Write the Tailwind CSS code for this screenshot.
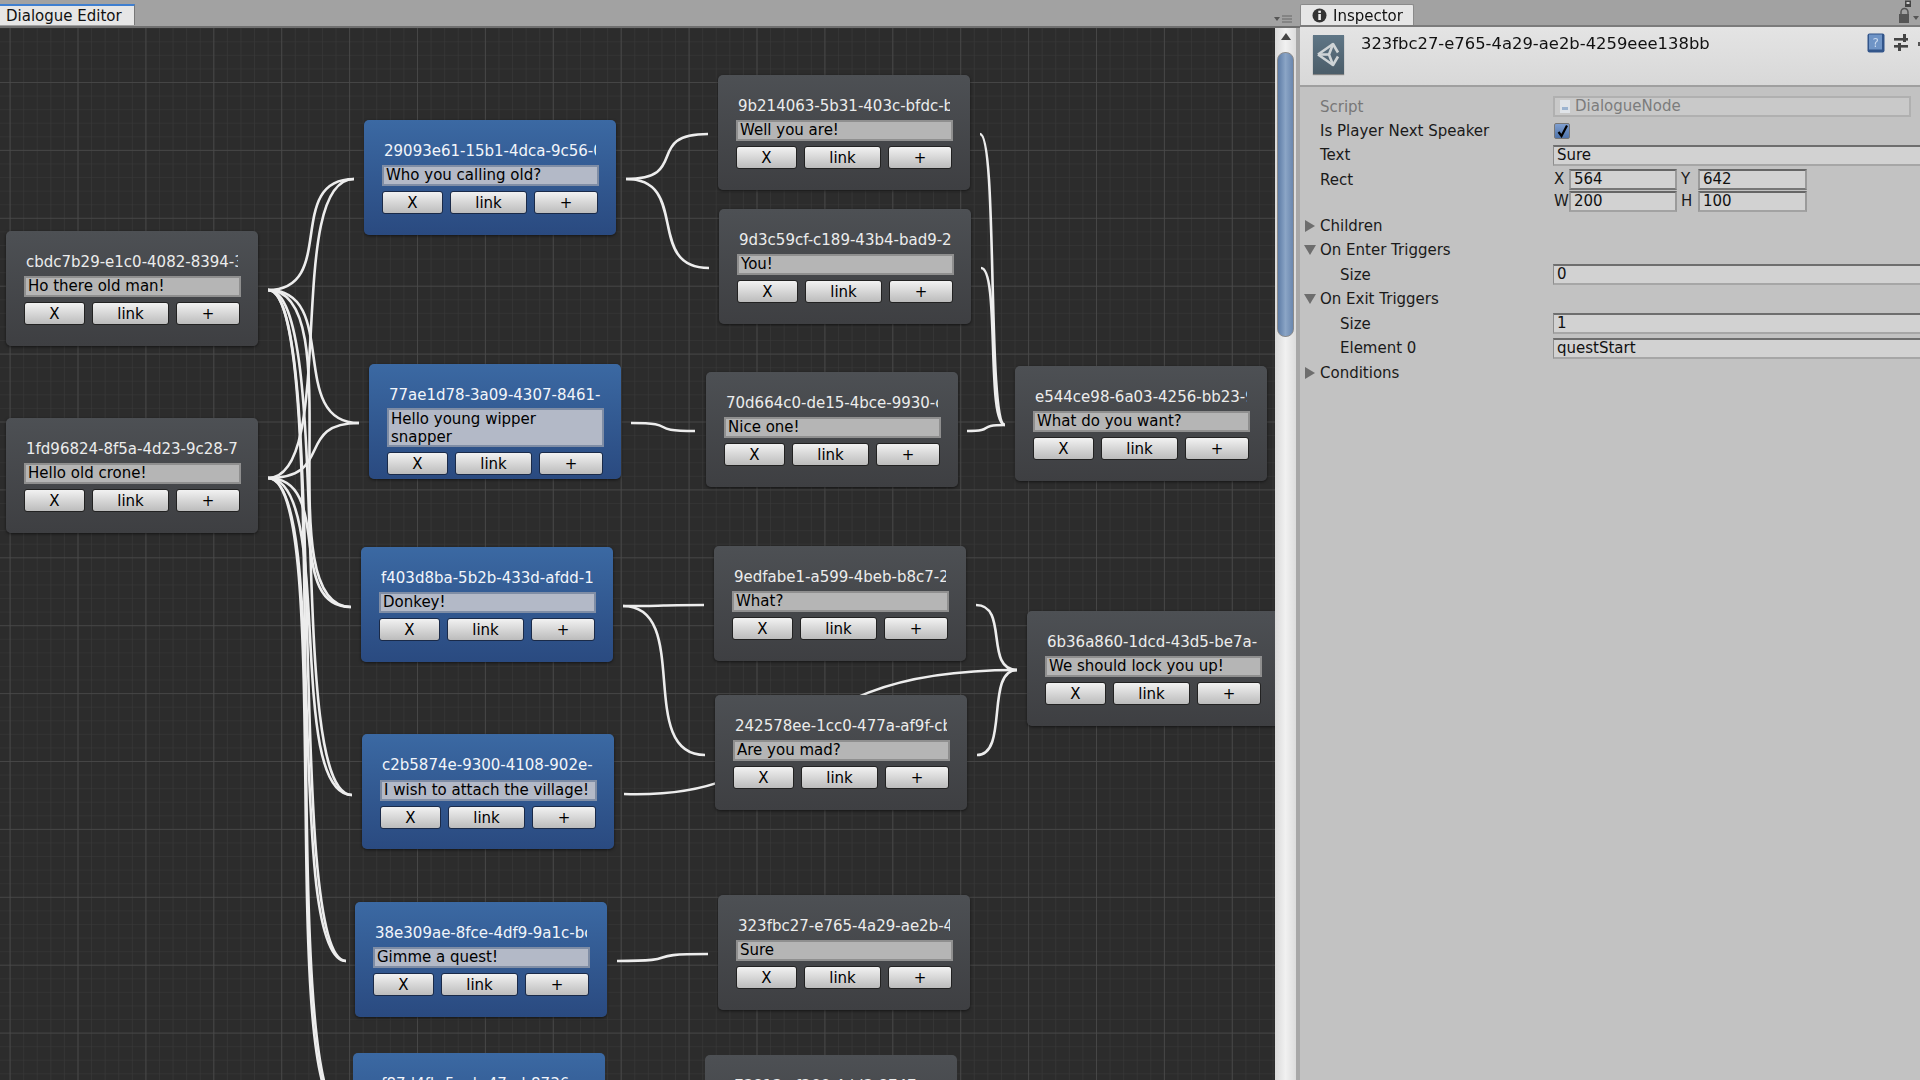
<!DOCTYPE html>
<html><head><meta charset="utf-8">
<script src="https://cdn.jsdelivr.net/npm/@tailwindcss/browser@4"></script>
</head>
<body class="m-0 overflow-hidden bg-[#a2a2a2]">
<div class="flex w-[1920px] h-[1080px] overflow-hidden font-['DejaVu_Sans',sans-serif] text-[15px] text-black blur-[0.4px]">

  <!-- LEFT: Dialogue Editor -->
  <div class="flex flex-col w-[1300px] shrink-0">
    <div class="relative h-[28px] bg-[#a2a2a2] border-b-2 border-[#6f6f6f] pt-[4px]">
      <div class="w-[135px] h-[21px] bg-[#e6e6e6] border-t-2 border-[#3f7fd0] border-r border-r-[#777] pl-[6px] leading-[20px] text-[15px] text-[#111]">Dialogue Editor</div>
      <div class="absolute right-[6px] top-[14px] flex items-center gap-[1px]">
        <svg width="20" height="10" viewBox="0 0 20 10"><polygon points="0,3 6,3 3,7" fill="#555"/><path d="M8 2h10M8 5h10M8 8h10" stroke="#666" stroke-width="1.2"/></svg>
      </div>
    </div>
    <div class="flex flex-1 min-h-0">
      <!-- Canvas -->
      <div class="relative w-[1275px] h-[1052px] overflow-hidden bg-[#2c2c2c]">
        <svg class="absolute left-0 top-0" width="1275" height="1052" viewBox="0 28 1275 1052" fill="none">
          <defs>
            <pattern id="minor" x="9.6" y="14.1" width="13.58" height="13.58" patternUnits="userSpaceOnUse">
              <path d="M0 0V13.58M0 0H13.58" stroke="#3a3a3a" stroke-width="1.2"/>
            </pattern>
            <pattern id="major" x="9.6" y="14.1" width="67.9" height="67.9" patternUnits="userSpaceOnUse">
              <path d="M0 0V67.9M0 0H67.9" stroke="#4a4a4a" stroke-width="1.6"/>
            </pattern>
          </defs>
          <rect x="0" y="28" width="1275" height="1052" fill="url(#minor)"/>
          <rect x="0" y="28" width="1275" height="1052" fill="url(#major)"/>
          <g stroke="#ededed" stroke-width="2.6" stroke-linecap="butt">
            <path d="M268 290C338 290 284 179 354 179"/>
            <path d="M268 290C341 290 286 423 359 423"/>
            <path d="M268 290C353 290 266 607 351 607"/>
            <path d="M268 290C335 290 285 795 352 795"/>
            <path d="M268 290C330 290 284 961 346 961"/>
            <path d="M268 290C336 290 275 1112 343 1112"/>
            <path d="M268 478C338 478 284 179 354 179"/>
            <path d="M268 478C335 478 294 423 359 423"/>
            <path d="M268 478C334 478 285 607 351 607"/>
            <path d="M268 478C335 478 285 795 352 795"/>
            <path d="M268 478C330 478 284 961 346 961"/>
            <path d="M268 478C336 478 275 1112 343 1112"/>
            <path d="M626 179C691 179 643 134 708 134"/>
            <path d="M626 179C691 179 644 268 709 268"/>
            <path d="M631 423C682 423 644 431 695 431"/>
            <path d="M623 606C688 606 639 605 704 605"/>
            <path d="M623 606C693 606 635 755 705 755"/>
            <path d="M624 794C820 800 760 670 1017 670"/>
            <path d="M617 961C690 961 635 954 708 954"/>
            <path d="M980 134C998 134 987 425 1005 425"/>
            <path d="M981 268C1000 268 986 425 1005 425"/>
            <path d="M967 431C997 431 975 425 1005 425"/>
            <path d="M976 605C1009 605 984 670 1017 670"/>
            <path d="M977 755C1009 755 985 670 1017 670"/>
          </g>
        </svg>

        <!-- gray nodes -->
        <div class="absolute left-[6px] top-[203px] w-[252px] h-[115px] rounded-[5px] bg-gradient-to-b from-[#4d5054] to-[#3e3f42] shadow-[0_1px_3px_#0008] pt-[21px]">
          <div class="ml-[20px] w-[212px] h-[20px] leading-[20px] overflow-hidden whitespace-nowrap text-[#ececec]">cbdc7b29-e1c0-4082-8394-3f</div>
          <div class="mx-[18px] mt-[4px] h-[21px] w-[217px] bg-[#b5b5b5] border-2 border-[#8f8f8f] pl-[2px] leading-[17px]">Ho there old man!</div>
          <div class="flex gap-[7px] ml-[18px] mt-[5px]">
            <button class="w-[61px] h-[23px] rounded-[3px] border border-[#222] bg-gradient-to-b from-[#f2f2f2] to-[#bcbcbc] leading-[20px]">X</button>
            <button class="w-[77px] h-[23px] rounded-[3px] border border-[#222] bg-gradient-to-b from-[#f2f2f2] to-[#bcbcbc] leading-[20px]">link</button>
            <button class="w-[64px] h-[23px] rounded-[3px] border border-[#222] bg-gradient-to-b from-[#f2f2f2] to-[#bcbcbc] leading-[20px]">+</button>
          </div>
        </div>
        <div class="absolute left-[6px] top-[390px] w-[252px] h-[115px] rounded-[5px] bg-gradient-to-b from-[#4d5054] to-[#3e3f42] shadow-[0_1px_3px_#0008] pt-[21px]">
          <div class="ml-[20px] w-[212px] h-[20px] leading-[20px] overflow-hidden whitespace-nowrap text-[#ececec]">1fd96824-8f5a-4d23-9c28-7e</div>
          <div class="mx-[18px] mt-[4px] h-[21px] w-[217px] bg-[#b5b5b5] border-2 border-[#8f8f8f] pl-[2px] leading-[17px]">Hello old crone!</div>
          <div class="flex gap-[7px] ml-[18px] mt-[5px]">
            <button class="w-[61px] h-[23px] rounded-[3px] border border-[#222] bg-gradient-to-b from-[#f2f2f2] to-[#bcbcbc] leading-[20px]">X</button>
            <button class="w-[77px] h-[23px] rounded-[3px] border border-[#222] bg-gradient-to-b from-[#f2f2f2] to-[#bcbcbc] leading-[20px]">link</button>
            <button class="w-[64px] h-[23px] rounded-[3px] border border-[#222] bg-gradient-to-b from-[#f2f2f2] to-[#bcbcbc] leading-[20px]">+</button>
          </div>
        </div>
        <div class="absolute left-[718px] top-[47px] w-[252px] h-[115px] rounded-[5px] bg-gradient-to-b from-[#4d5054] to-[#3e3f42] shadow-[0_1px_3px_#0008] pt-[21px]">
          <div class="ml-[20px] w-[212px] h-[20px] leading-[20px] overflow-hidden whitespace-nowrap text-[#ececec]">9b214063-5b31-403c-bfdc-b1</div>
          <div class="mx-[18px] mt-[4px] h-[21px] w-[217px] bg-[#b5b5b5] border-2 border-[#8f8f8f] pl-[2px] leading-[17px]">Well you are!</div>
          <div class="flex gap-[7px] ml-[18px] mt-[5px]">
            <button class="w-[61px] h-[23px] rounded-[3px] border border-[#222] bg-gradient-to-b from-[#f2f2f2] to-[#bcbcbc] leading-[20px]">X</button>
            <button class="w-[77px] h-[23px] rounded-[3px] border border-[#222] bg-gradient-to-b from-[#f2f2f2] to-[#bcbcbc] leading-[20px]">link</button>
            <button class="w-[64px] h-[23px] rounded-[3px] border border-[#222] bg-gradient-to-b from-[#f2f2f2] to-[#bcbcbc] leading-[20px]">+</button>
          </div>
        </div>
        <div class="absolute left-[719px] top-[181px] w-[252px] h-[115px] rounded-[5px] bg-gradient-to-b from-[#4d5054] to-[#3e3f42] shadow-[0_1px_3px_#0008] pt-[21px]">
          <div class="ml-[20px] w-[212px] h-[20px] leading-[20px] overflow-hidden whitespace-nowrap text-[#ececec]">9d3c59cf-c189-43b4-bad9-2a</div>
          <div class="mx-[18px] mt-[4px] h-[21px] w-[217px] bg-[#b5b5b5] border-2 border-[#8f8f8f] pl-[2px] leading-[17px]">You!</div>
          <div class="flex gap-[7px] ml-[18px] mt-[5px]">
            <button class="w-[61px] h-[23px] rounded-[3px] border border-[#222] bg-gradient-to-b from-[#f2f2f2] to-[#bcbcbc] leading-[20px]">X</button>
            <button class="w-[77px] h-[23px] rounded-[3px] border border-[#222] bg-gradient-to-b from-[#f2f2f2] to-[#bcbcbc] leading-[20px]">link</button>
            <button class="w-[64px] h-[23px] rounded-[3px] border border-[#222] bg-gradient-to-b from-[#f2f2f2] to-[#bcbcbc] leading-[20px]">+</button>
          </div>
        </div>
        <div class="absolute left-[706px] top-[344px] w-[252px] h-[115px] rounded-[5px] bg-gradient-to-b from-[#4d5054] to-[#3e3f42] shadow-[0_1px_3px_#0008] pt-[21px]">
          <div class="ml-[20px] w-[212px] h-[20px] leading-[20px] overflow-hidden whitespace-nowrap text-[#ececec]">70d664c0-de15-4bce-9930-ce</div>
          <div class="mx-[18px] mt-[4px] h-[21px] w-[217px] bg-[#b5b5b5] border-2 border-[#8f8f8f] pl-[2px] leading-[17px]">Nice one!</div>
          <div class="flex gap-[7px] ml-[18px] mt-[5px]">
            <button class="w-[61px] h-[23px] rounded-[3px] border border-[#222] bg-gradient-to-b from-[#f2f2f2] to-[#bcbcbc] leading-[20px]">X</button>
            <button class="w-[77px] h-[23px] rounded-[3px] border border-[#222] bg-gradient-to-b from-[#f2f2f2] to-[#bcbcbc] leading-[20px]">link</button>
            <button class="w-[64px] h-[23px] rounded-[3px] border border-[#222] bg-gradient-to-b from-[#f2f2f2] to-[#bcbcbc] leading-[20px]">+</button>
          </div>
        </div>
        <div class="absolute left-[1015px] top-[338px] w-[252px] h-[115px] rounded-[5px] bg-gradient-to-b from-[#4d5054] to-[#3e3f42] shadow-[0_1px_3px_#0008] pt-[21px]">
          <div class="ml-[20px] w-[212px] h-[20px] leading-[20px] overflow-hidden whitespace-nowrap text-[#ececec]">e544ce98-6a03-4256-bb23-9f</div>
          <div class="mx-[18px] mt-[4px] h-[21px] w-[217px] bg-[#b5b5b5] border-2 border-[#8f8f8f] pl-[2px] leading-[17px]">What do you want?</div>
          <div class="flex gap-[7px] ml-[18px] mt-[5px]">
            <button class="w-[61px] h-[23px] rounded-[3px] border border-[#222] bg-gradient-to-b from-[#f2f2f2] to-[#bcbcbc] leading-[20px]">X</button>
            <button class="w-[77px] h-[23px] rounded-[3px] border border-[#222] bg-gradient-to-b from-[#f2f2f2] to-[#bcbcbc] leading-[20px]">link</button>
            <button class="w-[64px] h-[23px] rounded-[3px] border border-[#222] bg-gradient-to-b from-[#f2f2f2] to-[#bcbcbc] leading-[20px]">+</button>
          </div>
        </div>
        <div class="absolute left-[714px] top-[518px] w-[252px] h-[115px] rounded-[5px] bg-gradient-to-b from-[#4d5054] to-[#3e3f42] shadow-[0_1px_3px_#0008] pt-[21px]">
          <div class="ml-[20px] w-[212px] h-[20px] leading-[20px] overflow-hidden whitespace-nowrap text-[#ececec]">9edfabe1-a599-4beb-b8c7-2f</div>
          <div class="mx-[18px] mt-[4px] h-[21px] w-[217px] bg-[#b5b5b5] border-2 border-[#8f8f8f] pl-[2px] leading-[17px]">What?</div>
          <div class="flex gap-[7px] ml-[18px] mt-[5px]">
            <button class="w-[61px] h-[23px] rounded-[3px] border border-[#222] bg-gradient-to-b from-[#f2f2f2] to-[#bcbcbc] leading-[20px]">X</button>
            <button class="w-[77px] h-[23px] rounded-[3px] border border-[#222] bg-gradient-to-b from-[#f2f2f2] to-[#bcbcbc] leading-[20px]">link</button>
            <button class="w-[64px] h-[23px] rounded-[3px] border border-[#222] bg-gradient-to-b from-[#f2f2f2] to-[#bcbcbc] leading-[20px]">+</button>
          </div>
        </div>
        <div class="absolute left-[715px] top-[667px] w-[252px] h-[115px] rounded-[5px] bg-gradient-to-b from-[#4d5054] to-[#3e3f42] shadow-[0_1px_3px_#0008] pt-[21px]">
          <div class="ml-[20px] w-[212px] h-[20px] leading-[20px] overflow-hidden whitespace-nowrap text-[#ececec]">242578ee-1cc0-477a-af9f-cb8</div>
          <div class="mx-[18px] mt-[4px] h-[21px] w-[217px] bg-[#b5b5b5] border-2 border-[#8f8f8f] pl-[2px] leading-[17px]">Are you mad?</div>
          <div class="flex gap-[7px] ml-[18px] mt-[5px]">
            <button class="w-[61px] h-[23px] rounded-[3px] border border-[#222] bg-gradient-to-b from-[#f2f2f2] to-[#bcbcbc] leading-[20px]">X</button>
            <button class="w-[77px] h-[23px] rounded-[3px] border border-[#222] bg-gradient-to-b from-[#f2f2f2] to-[#bcbcbc] leading-[20px]">link</button>
            <button class="w-[64px] h-[23px] rounded-[3px] border border-[#222] bg-gradient-to-b from-[#f2f2f2] to-[#bcbcbc] leading-[20px]">+</button>
          </div>
        </div>
        <div class="absolute left-[1027px] top-[583px] w-[252px] h-[115px] rounded-[5px] bg-gradient-to-b from-[#4d5054] to-[#3e3f42] shadow-[0_1px_3px_#0008] pt-[21px]">
          <div class="ml-[20px] w-[212px] h-[20px] leading-[20px] overflow-hidden whitespace-nowrap text-[#ececec]">6b36a860-1dcd-43d5-be7a-</div>
          <div class="mx-[18px] mt-[4px] h-[21px] w-[217px] bg-[#b5b5b5] border-2 border-[#8f8f8f] pl-[2px] leading-[17px]">We should lock you up!</div>
          <div class="flex gap-[7px] ml-[18px] mt-[5px]">
            <button class="w-[61px] h-[23px] rounded-[3px] border border-[#222] bg-gradient-to-b from-[#f2f2f2] to-[#bcbcbc] leading-[20px]">X</button>
            <button class="w-[77px] h-[23px] rounded-[3px] border border-[#222] bg-gradient-to-b from-[#f2f2f2] to-[#bcbcbc] leading-[20px]">link</button>
            <button class="w-[64px] h-[23px] rounded-[3px] border border-[#222] bg-gradient-to-b from-[#f2f2f2] to-[#bcbcbc] leading-[20px]">+</button>
          </div>
        </div>
        <div class="absolute left-[718px] top-[867px] w-[252px] h-[115px] rounded-[5px] bg-gradient-to-b from-[#4d5054] to-[#3e3f42] shadow-[0_1px_3px_#0008] pt-[21px]">
          <div class="ml-[20px] w-[212px] h-[20px] leading-[20px] overflow-hidden whitespace-nowrap text-[#ececec]">323fbc27-e765-4a29-ae2b-4259</div>
          <div class="mx-[18px] mt-[4px] h-[21px] w-[217px] bg-[#b5b5b5] border-2 border-[#8f8f8f] pl-[2px] leading-[17px]">Sure</div>
          <div class="flex gap-[7px] ml-[18px] mt-[5px]">
            <button class="w-[61px] h-[23px] rounded-[3px] border border-[#222] bg-gradient-to-b from-[#f2f2f2] to-[#bcbcbc] leading-[20px]">X</button>
            <button class="w-[77px] h-[23px] rounded-[3px] border border-[#222] bg-gradient-to-b from-[#f2f2f2] to-[#bcbcbc] leading-[20px]">link</button>
            <button class="w-[64px] h-[23px] rounded-[3px] border border-[#222] bg-gradient-to-b from-[#f2f2f2] to-[#bcbcbc] leading-[20px]">+</button>
          </div>
        </div>
        <div class="absolute left-[705px] top-[1027px] w-[252px] h-[115px] rounded-[5px] bg-gradient-to-b from-[#4d5054] to-[#3e3f42] pt-[21px]">
          <div class="ml-[20px] w-[212px] h-[20px] leading-[20px] overflow-hidden whitespace-nowrap text-[#ececec]">e73813c-f366-4dd3-8747-a</div>
        </div>

        <!-- blue nodes -->
        <div class="absolute left-[364px] top-[92px] w-[252px] h-[115px] rounded-[5px] bg-gradient-to-b from-[#3b69a3] to-[#2a4a80] shadow-[0_1px_3px_#0008] pt-[21px]">
          <div class="ml-[20px] w-[212px] h-[20px] leading-[20px] overflow-hidden whitespace-nowrap text-[#f2f5fa]">29093e61-15b1-4dca-9c56-0c</div>
          <div class="mx-[18px] mt-[4px] h-[21px] w-[217px] bg-[#b3b9c7] border-2 border-[#7f8da5] pl-[2px] leading-[17px]">Who you calling old?</div>
          <div class="flex gap-[7px] ml-[18px] mt-[5px]">
            <button class="w-[61px] h-[23px] rounded-[3px] border border-[#1a2a48] bg-gradient-to-b from-[#f2f2f2] to-[#bcbcbc] leading-[20px]">X</button>
            <button class="w-[77px] h-[23px] rounded-[3px] border border-[#1a2a48] bg-gradient-to-b from-[#f2f2f2] to-[#bcbcbc] leading-[20px]">link</button>
            <button class="w-[64px] h-[23px] rounded-[3px] border border-[#1a2a48] bg-gradient-to-b from-[#f2f2f2] to-[#bcbcbc] leading-[20px]">+</button>
          </div>
        </div>
        <div class="absolute left-[369px] top-[336px] w-[252px] h-[115px] rounded-[5px] bg-gradient-to-b from-[#3b69a3] to-[#2a4a80] shadow-[0_1px_3px_#0008] pt-[21px]">
          <div class="ml-[20px] w-[212px] h-[20px] leading-[20px] overflow-hidden whitespace-nowrap text-[#f2f5fa]">77ae1d78-3a09-4307-8461-</div>
          <div class="mx-[18px] mt-[3px] h-[39px] w-[217px] bg-[#b3b9c7] border-2 border-[#7f8da5] pl-[2px] leading-[18px]">Hello young wipper<br>snapper</div>
          <div class="flex gap-[7px] ml-[18px] mt-[5px]">
            <button class="w-[61px] h-[23px] rounded-[3px] border border-[#1a2a48] bg-gradient-to-b from-[#f2f2f2] to-[#bcbcbc] leading-[20px]">X</button>
            <button class="w-[77px] h-[23px] rounded-[3px] border border-[#1a2a48] bg-gradient-to-b from-[#f2f2f2] to-[#bcbcbc] leading-[20px]">link</button>
            <button class="w-[64px] h-[23px] rounded-[3px] border border-[#1a2a48] bg-gradient-to-b from-[#f2f2f2] to-[#bcbcbc] leading-[20px]">+</button>
          </div>
        </div>
        <div class="absolute left-[361px] top-[519px] w-[252px] h-[115px] rounded-[5px] bg-gradient-to-b from-[#3b69a3] to-[#2a4a80] shadow-[0_1px_3px_#0008] pt-[21px]">
          <div class="ml-[20px] w-[212px] h-[20px] leading-[20px] overflow-hidden whitespace-nowrap text-[#f2f5fa]">f403d8ba-5b2b-433d-afdd-1</div>
          <div class="mx-[18px] mt-[4px] h-[21px] w-[217px] bg-[#b3b9c7] border-2 border-[#7f8da5] pl-[2px] leading-[17px]">Donkey!</div>
          <div class="flex gap-[7px] ml-[18px] mt-[5px]">
            <button class="w-[61px] h-[23px] rounded-[3px] border border-[#1a2a48] bg-gradient-to-b from-[#f2f2f2] to-[#bcbcbc] leading-[20px]">X</button>
            <button class="w-[77px] h-[23px] rounded-[3px] border border-[#1a2a48] bg-gradient-to-b from-[#f2f2f2] to-[#bcbcbc] leading-[20px]">link</button>
            <button class="w-[64px] h-[23px] rounded-[3px] border border-[#1a2a48] bg-gradient-to-b from-[#f2f2f2] to-[#bcbcbc] leading-[20px]">+</button>
          </div>
        </div>
        <div class="absolute left-[362px] top-[706px] w-[252px] h-[115px] rounded-[5px] bg-gradient-to-b from-[#3b69a3] to-[#2a4a80] shadow-[0_1px_3px_#0008] pt-[21px]">
          <div class="ml-[20px] w-[212px] h-[20px] leading-[20px] overflow-hidden whitespace-nowrap text-[#f2f5fa]">c2b5874e-9300-4108-902e-</div>
          <div class="mx-[18px] mt-[5px] h-[21px] w-[217px] bg-[#b3b9c7] border-2 border-[#7f8da5] pl-[2px] leading-[17px] whitespace-nowrap">I wish to attach the village!</div>
          <div class="flex gap-[7px] ml-[18px] mt-[5px]">
            <button class="w-[61px] h-[23px] rounded-[3px] border border-[#1a2a48] bg-gradient-to-b from-[#f2f2f2] to-[#bcbcbc] leading-[20px]">X</button>
            <button class="w-[77px] h-[23px] rounded-[3px] border border-[#1a2a48] bg-gradient-to-b from-[#f2f2f2] to-[#bcbcbc] leading-[20px]">link</button>
            <button class="w-[64px] h-[23px] rounded-[3px] border border-[#1a2a48] bg-gradient-to-b from-[#f2f2f2] to-[#bcbcbc] leading-[20px]">+</button>
          </div>
        </div>
        <div class="absolute left-[355px] top-[874px] w-[252px] h-[115px] rounded-[5px] bg-gradient-to-b from-[#3b69a3] to-[#2a4a80] shadow-[0_1px_3px_#0008] pt-[21px]">
          <div class="ml-[20px] w-[212px] h-[20px] leading-[20px] overflow-hidden whitespace-nowrap text-[#f2f5fa]">38e309ae-8fce-4df9-9a1c-bc</div>
          <div class="mx-[18px] mt-[4px] h-[21px] w-[217px] bg-[#b3b9c7] border-2 border-[#7f8da5] pl-[2px] leading-[17px]">Gimme a quest!</div>
          <div class="flex gap-[7px] ml-[18px] mt-[5px]">
            <button class="w-[61px] h-[23px] rounded-[3px] border border-[#1a2a48] bg-gradient-to-b from-[#f2f2f2] to-[#bcbcbc] leading-[20px]">X</button>
            <button class="w-[77px] h-[23px] rounded-[3px] border border-[#1a2a48] bg-gradient-to-b from-[#f2f2f2] to-[#bcbcbc] leading-[20px]">link</button>
            <button class="w-[64px] h-[23px] rounded-[3px] border border-[#1a2a48] bg-gradient-to-b from-[#f2f2f2] to-[#bcbcbc] leading-[20px]">+</button>
          </div>
        </div>
        <div class="absolute left-[353px] top-[1025px] w-[252px] h-[115px] rounded-[5px] bg-gradient-to-b from-[#3b69a3] to-[#2a4a80] pt-[21px]">
          <div class="ml-[20px] w-[212px] h-[20px] leading-[20px] overflow-hidden whitespace-nowrap text-[#f2f5fa]">cf87d4fb-5aeb-47ed-8736-e</div>
        </div>
      </div>
      <!-- Scrollbar -->
      <div class="flex flex-col items-center w-[21px] h-[1052px] bg-gradient-to-r from-[#d9d9d9] via-[#f1f1f1] to-[#dcdcdc]">
        <svg class="mt-[3px]" width="12" height="12" viewBox="0 0 12 12"><polygon points="6,2 11,9 1,9" fill="#444"/></svg>
        <div class="mt-[9px] w-[17px] h-[285px] rounded-[8px] bg-gradient-to-r from-[#5d7ca6] via-[#8ba5c6] to-[#6a87ae] border border-[#8b8b8b]"></div>
      </div>
      <div class="w-[4px] bg-[#a8a8a8]"></div>
    </div>
  </div>

  <!-- RIGHT: Inspector -->
  <div class="flex flex-col flex-1 min-w-0">
    <div class="relative h-[27px] bg-[#a2a2a2] pt-[4px] border-b-2 border-[#7b7b7b]">
      <div class="flex items-center gap-[6px] w-[114px] h-[21px] bg-[#e6e6e6] rounded-t-[2px] border border-b-0 border-[#8a8a8a] pl-[11px] pt-[2px] text-[15px] text-[#111]">
        <svg width="15" height="15" viewBox="0 0 15 15" class="shrink-0 -mt-[2px]"><circle cx="7.5" cy="7.5" r="7" fill="#333"/><rect x="6.3" y="6" width="2.6" height="6" fill="#eee"/><rect x="6.3" y="2.7" width="2.6" height="2.2" fill="#eee"/></svg>
        <span>Inspector</span>
      </div>
      <svg class="absolute left-[597px] top-0" width="23" height="26" viewBox="0 0 23 26"><rect x="8" y="0.5" width="6" height="6.5" fill="#444"/><rect x="9.5" y="2" width="3" height="2" fill="#ccc"/><path d="M4 15v-3a3.5 3.5 0 0 1 7 0v3" fill="none" stroke="#555" stroke-width="1.5"/><rect x="2" y="14" width="10" height="9" fill="#555"/><polygon points="16,16 22,16 19,20" fill="#555"/></svg>
    </div>
    <div class="relative h-[60px] bg-gradient-to-b from-[#e4e4e4] to-[#d8d8d8] border-b-2 border-[#9f9f9f]">
      <div class="absolute left-[13px] top-[8px] flex items-center justify-center w-[31px] h-[39px] bg-gradient-to-b from-[#5f7686] to-[#4b5d69] shadow-[0_1px_1px_#0006]">
        <svg width="27" height="29" viewBox="0 0 27 29" fill="none" stroke="#cfd4d6" stroke-width="2.6" stroke-linejoin="round"><path d="M3 14.5 18 4l5 8.5"/><path d="M3 14.5 18 25l5-8.5"/><path d="M3 14.5h11"/><path d="M18 4 14 14.5 18 25"/></svg>
      </div>
      <div class="absolute left-[61px] top-[7px] text-[16.4px] leading-[20px] text-[#111]">323fbc27-e765-4a29-ae2b-4259eee138bb</div>
      <svg class="absolute left-[567px] top-[6px]" width="18" height="20" viewBox="0 0 18 20"><rect x="0.5" y="0.5" width="17" height="19" rx="2" fill="#32558a"/><rect x="2" y="1.5" width="13" height="15" fill="#6f94c6"/><text x="5.5" y="14" font-size="12" fill="#c9d9ef" font-family="DejaVu Sans">?</text></svg>
      <svg class="absolute left-[594px] top-[7px]" width="15" height="18" viewBox="0 0 15 18" fill="#444"><rect x="0" y="4" width="14" height="2.6"/><rect x="9" y="0" width="3" height="8"/><rect x="0" y="11" width="14" height="2.6"/><rect x="4" y="9" width="3" height="8"/></svg>
      <div class="absolute left-[618px] top-[15px] w-[2px] h-[4px] bg-[#555]"></div>
    </div>
    <div class="flex-1 bg-[#c2c2c2] pt-[7px] text-[#1a1a1a] text-[15px] overflow-hidden">
      <div class="flex items-center h-[24.5px] pl-[20px]">
        <span class="w-[233px] pt-[1px] text-[#777]">Script</span>
        <div class="flex items-center gap-[5px] w-[358px] h-[21px] bg-[#c9c9c9] border-2 border-[#b0b0b0] pl-[5px] text-[#7c7c7c]"><svg width="10" height="13" viewBox="0 0 10 13"><rect width="10" height="13" fill="#dfe3e8"/><rect x="2" y="7" width="6" height="3" fill="#9bb3d0"/></svg>DialogueNode</div>
      </div>
      <div class="flex items-center h-[24.5px] pl-[20px]">
        <span class="w-[233px] pt-[1px]">Is Player Next Speaker</span>
        <div class="flex items-center justify-center w-[16px] h-[16px] ml-[1px] rounded-[2px] bg-gradient-to-b from-[#7f9fd0] to-[#4f74aa] border border-[#777]">
          <svg width="13" height="14" viewBox="0 0 13 14" fill="none"><path d="M2.5 8 5.5 12 11 1.5" stroke="#000" stroke-width="2.2"/></svg>
        </div>
      </div>
      <div class="flex items-center h-[24.5px] pl-[20px]">
        <span class="w-[233px] shrink-0">Text</span>
        <div class="flex-1 h-[21px] bg-[#d2d2d2] border-t-2 border-l border-b-2 border-t-[#6e6e6e] border-l-[#8d8d8d] border-b-[#a6a6a6] pl-[3px] leading-[17px] text-[#111]">Sure</div>
      </div>
      <div class="flex pl-[20px] h-[46px] pt-[1.5px]">
        <span class="w-[233px] shrink-0">Rect</span>
        <div class="grid grid-cols-[16px_108px_21px_109px] auto-rows-[21px] gap-y-[1px] items-center">
          <span class="pl-[1px]">X</span><div class="h-[21px] bg-[#d2d2d2] border-t-2 border-x-2 border-b-2 border-t-[#666] border-x-[#9a9a9a] border-b-[#777] pl-[3px] leading-[17px] text-[#111]">564</div>
          <span class="pl-[4px]">Y</span><div class="h-[21px] bg-[#d2d2d2] border-t-2 border-x-2 border-b-2 border-t-[#666] border-x-[#9a9a9a] border-b-[#777] pl-[3px] leading-[17px] text-[#111]">642</div>
          <span class="pl-[1px]">W</span><div class="h-[21px] bg-[#d2d2d2] border-t-2 border-x-2 border-b-2 border-t-[#666] border-x-[#9a9a9a] border-b-[#a2a2a2] pl-[3px] leading-[17px] text-[#111]">200</div>
          <span class="pl-[4px]">H</span><div class="h-[21px] bg-[#d2d2d2] border-t-2 border-x-2 border-b-2 border-t-[#666] border-x-[#9a9a9a] border-b-[#a2a2a2] pl-[3px] leading-[17px] text-[#111]">100</div>
        </div>
      </div>
      <div class="flex items-center h-[24.5px] pl-[4px]">
        <svg class="w-[16px] shrink-0" width="16" height="14" viewBox="0 0 16 14"><polygon points="1,1 11,7 1,13" fill="#6d6d6d"/></svg><span>Children</span>
      </div>
      <div class="flex items-center h-[24.5px] pl-[4px]">
        <svg class="w-[16px] shrink-0" width="16" height="14" viewBox="0 0 16 14"><polygon points="0,2 12,2 6,12" fill="#6d6d6d"/></svg><span>On Enter Triggers</span>
      </div>
      <div class="flex items-center h-[24.5px] pl-[40px]">
        <span class="w-[213px] shrink-0">Size</span>
        <div class="flex-1 h-[21px] bg-[#d2d2d2] border-t-2 border-l border-b-2 border-t-[#6e6e6e] border-l-[#8d8d8d] border-b-[#a6a6a6] pl-[3px] leading-[17px] text-[#111]">0</div>
      </div>
      <div class="flex items-center h-[24.5px] pl-[4px]">
        <svg class="w-[16px] shrink-0" width="16" height="14" viewBox="0 0 16 14"><polygon points="0,2 12,2 6,12" fill="#6d6d6d"/></svg><span>On Exit Triggers</span>
      </div>
      <div class="flex items-center h-[24.5px] pl-[40px]">
        <span class="w-[213px] shrink-0">Size</span>
        <div class="flex-1 h-[21px] bg-[#d2d2d2] border-t-2 border-l border-b-2 border-t-[#6e6e6e] border-l-[#8d8d8d] border-b-[#a6a6a6] pl-[3px] leading-[17px] text-[#111]">1</div>
      </div>
      <div class="flex items-center h-[24.5px] pl-[40px]">
        <span class="w-[213px] shrink-0">Element 0</span>
        <div class="flex-1 h-[21px] bg-[#d2d2d2] border-t-2 border-l border-b-2 border-t-[#6e6e6e] border-l-[#8d8d8d] border-b-[#a6a6a6] pl-[3px] leading-[17px] text-[#111]">questStart</div>
      </div>
      <div class="flex items-center h-[24.5px] pl-[4px]">
        <svg class="w-[16px] shrink-0" width="16" height="14" viewBox="0 0 16 14"><polygon points="1,1 11,7 1,13" fill="#6d6d6d"/></svg><span>Conditions</span>
      </div>
    </div>
  </div>
</div>
</body></html>
